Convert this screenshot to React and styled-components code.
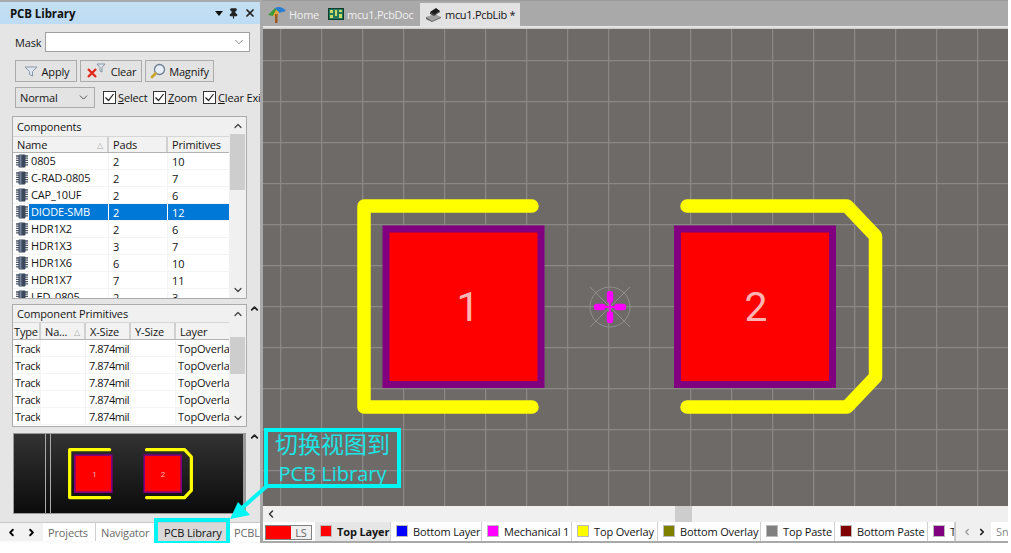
import React from 'react'
import styled, { createGlobalStyle } from 'styled-components'
import { ChevronDown, ChevronUp, ChevronLeft, ChevronRight, Pin, X } from 'lucide-react'

const GlobalStyle = createGlobalStyle`
  html, body { margin: 0; padding: 0; background: #fff; overflow: hidden; }
  * { box-sizing: border-box; }
  body {
    font-family: "Open Sans", "Noto Sans", "Liberation Sans", sans-serif;
    font-size: 11px;
    letter-spacing: -0.15px;
    color: #151515;
  }
`

const Window = styled.div`
  position: relative;
  display: flex;
  width: 1008px;
  height: 543px;
  background: #a9a9a9;
`

/* left panel */
const LeftPanel = styled.aside`
  display: flex;
  flex-direction: column;
  width: 260px;
  margin-top: 2px;
  background: #e5e5e5;
  flex-shrink: 0;
  overflow: hidden;
`

const TitleBar = styled.header`
  display: flex;
  align-items: center;
  height: 22px;
  padding: 0 4px 0 10px;
  background: linear-gradient(#c4dff3, #bddcf4);
`

const TitleText = styled.h1`
  flex: 1;
  margin: 0;
  font-size: 11.5px;
  font-weight: 700;
  letter-spacing: -0.1px;
  color: #111;
`

const TitleIcons = styled.div`
  display: flex;
  align-items: center;
  gap: 5px;
  color: #222;
`

const Caret = styled.span`
  width: 0;
  height: 0;
  border-left: 4px solid transparent;
  border-right: 4px solid transparent;
  border-top: 5px solid #111;
`

const MaskRow = styled.div`
  display: flex;
  align-items: center;
  gap: 4px;
  height: 20px;
  margin: 8px 0 0 15px;
`

const MaskInput = styled.div`
  display: flex;
  align-items: center;
  justify-content: flex-end;
  width: 205px;
  height: 20px;
  padding-right: 3px;
  background: #fff;
  border: 1px solid #a0a0a0;
  color: #666;
`

const ButtonRow = styled.div`
  display: flex;
  gap: 3px;
  margin: 8px 0 0 15px;
`

const ToolButton = styled.button`
  display: flex;
  align-items: center;
  justify-content: center;
  gap: 3px;
  width: ${(p) => p.$width}px;
  height: 22px;
  padding: 0;
  background: #e3e3e3;
  border: 1px solid #ababab;
  font: inherit;
  letter-spacing: inherit;
  color: #151515;
`

const OptionRow = styled.div`
  display: flex;
  align-items: center;
  height: 21px;
  margin: 5px 0 0 15px;
  white-space: nowrap;
`

const ModeSelect = styled.div`
  display: flex;
  align-items: center;
  justify-content: space-between;
  width: 80px;
  height: 21px;
  margin-right: 8px;
  padding: 0 4px;
  flex-shrink: 0;
  background: #e3e3e3;
  border: 1px solid #ababab;
`

const CheckLabel = styled.label`
  display: flex;
  align-items: center;
  gap: 2px;
  width: ${(p) => p.$width}px;
  flex-shrink: 0;
`

const CheckBox = styled.span`
  display: flex;
  align-items: center;
  justify-content: center;
  width: 13px;
  height: 13px;
  background: #fff;
  border: 1px solid #333;
`

const ListPanel = styled.section`
  display: flex;
  width: 235px;
  height: ${(p) => p.$height}px;
  margin: ${(p) => p.$top}px 0 0 12px;
  background: #fff;
  border: 1px solid #ababab;
  overflow: hidden;
`

const ListBody = styled.div`
  flex: 1;
  min-width: 0;
`

const ListTitle = styled.div`
  display: flex;
  align-items: center;
  height: ${(p) => p.$height}px;
  padding-left: 4px;
  background: #f0f0f0;
`

const Row = styled.div`
  display: grid;
  grid-template-columns: ${(p) => p.$columns};
  height: 17px;
  background: #fff;
  border-bottom: 1px solid #f4f4f4;
`

const HeadRow = styled(Row)`
  height: ${(p) => p.$height}px;
  background: #f2f2f2;
  border-top: 1px solid #d6d6d6;
  border-bottom: 1px solid #b4b4b4;
`

const HeadCell = styled.div`
  display: flex;
  align-items: center;
  justify-content: space-between;
  padding: 0 ${(p) => p.$pad ?? 4}px;
  border-right: 2px solid #d0d0d0;
  overflow: hidden;
  white-space: nowrap;
  &:last-child { border-right: 0; }
`

const SortMark = styled.span`
  font-size: 8px;
  color: #aaa;
`

const Cell = styled.div`
  display: flex;
  align-items: center;
  padding-left: ${(p) => p.$pad ?? 4}px;
  background: ${(p) => (p.$selected ? '#0078d7' : 'transparent')};
  color: ${(p) => (p.$selected ? '#fff' : 'inherit')};
  border-right: 1px solid ${(p) => (p.$selected ? '#fff' : '#f4f4f4')};
  letter-spacing: ${(p) => (p.$tight ? '-0.45px' : 'inherit')};
  overflow: hidden;
  white-space: nowrap;
  &:last-child { border-right: 0; }
`

const NameCell = styled.div`
  display: flex;
  align-items: center;
  gap: 1px;
  padding-left: 3px;
  overflow: hidden;
`

const NameText = styled.span`
  flex: 1;
  height: 100%;
  padding-left: 2px;
  line-height: 16px;
  background: ${(p) => (p.$selected ? '#0078d7' : 'transparent')};
  color: ${(p) => (p.$selected ? '#fff' : 'inherit')};
  border-right: 1px solid ${(p) => (p.$selected ? '#fff' : '#f4f4f4')};
`

const ScrollTrack = styled.div`
  display: flex;
  flex-direction: column;
  flex-shrink: 0;
  width: 17px;
  background: #f0f0f0;
  color: #444;
`

const ScrollButton = styled.div`
  display: flex;
  align-items: center;
  justify-content: center;
  height: 17px;
  flex-shrink: 0;
`

const ScrollLane = styled.div`
  flex: 1;
  padding: ${(p) => p.$offset}px 1px 0;
`

const ScrollThumb = styled.div`
  height: ${(p) => p.$height}px;
  background: #cdcdcd;
`

const PreviewRow = styled.div`
  position: relative;
  width: 233px;
  height: 81px;
  margin: 6px 0 0 13px;
  background: linear-gradient(#333, #0b0b0b);
  border: 1px solid #9a9a9a;
  overflow: hidden;
`

const PreviewBars = styled.div`
  position: absolute;
  inset: 0;
  border-right: 2px solid #9a9a9a;
  &::before {
    content: '';
    position: absolute;
    top: 0;
    bottom: 0;
    left: 31px;
    width: 4px;
    border-left: 1px solid #aaa;
    border-right: 1px solid #aaa;
  }
`

const PreviewSvg = styled.svg`
  position: relative;
  display: block;
`

const PanelTabs = styled.nav`
  display: flex;
  align-items: stretch;
  height: 21px;
  margin-top: auto;
  padding-bottom: 2px;
  background: #fbfbfb;
  border-top: 1px solid #c8c8c8;
`

const TabArrows = styled.div`
  display: flex;
  align-items: center;
  justify-content: space-between;
  width: 43px;
  padding: 0 6px;
  background: #f2f2f2;
  color: #000;
  flex-shrink: 0;
`

const PanelTab = styled.div`
  display: flex;
  align-items: center;
  width: ${(p) => p.$width}px;
  padding-left: ${(p) => p.$pad}px;
  flex-shrink: 0;
  background: ${(p) => (p.$active ? '#d9d9d9' : '#fff')};
  color: ${(p) => (p.$active ? '#111' : '#6b6b6b')};
  border-right: 1px solid #d0d0d0;
  white-space: nowrap;
`

/* document area */
const Main = styled.main`
  display: flex;
  flex-direction: column;
  flex: 1;
  min-width: 0;
  margin-left: 3px;
`

const DocTabs = styled.div`
  display: flex;
  align-items: flex-end;
  height: 26px;
  padding-top: 2px;
  padding-left: 3px;
  background: #a9a9a9;
  border-top: 1px solid #9c9c9c;
`

const DocTab = styled.div`
  display: flex;
  align-items: center;
  gap: 3px;
  width: ${(p) => p.$width}px;
  height: 100%;
  padding-left: ${(p) => p.$pad}px;
  background: ${(p) => (p.$active ? '#e2e2e2' : 'transparent')};
  color: ${(p) => (p.$active ? '#111' : '#efefef')};
  letter-spacing: -0.3px;
  white-space: nowrap;
`

const TabRule = styled.div`
  height: 3px;
  background: linear-gradient(#f0f0f0, #c8c8c8);
`

const CanvasArea = styled.div`
  flex: 1;
  min-height: 0;
  background: #6e6a68;
  overflow: hidden;
  svg { display: block; }
`

const HScroll = styled.div`
  display: flex;
  align-items: center;
  height: 16px;
  padding-left: 2px;
  background: #f0f0f0;
  color: #333;
`

const HThumb = styled.div`
  width: 17px;
  height: 16px;
  margin-left: 398px;
  background: #cdcdcd;
`

const LayerBar = styled.div`
  display: flex;
  align-items: stretch;
  height: 19px;
  background: #fff;
  overflow: hidden;
`

const BottomEdge = styled.div`
  height: 2px;
`

const CurrentLayer = styled.div`
  display: flex;
  width: 47px;
  height: 15px;
  margin: 3px 3px 0 2px;
  background: #f0f0f0;
  border: 1px solid #808080;
  flex-shrink: 0;
`

const CurrentSwatch = styled.span`
  width: 25px;
  background: #ff0000;
`

const CurrentName = styled.span`
  flex: 1;
  text-align: center;
  line-height: 13px;
  color: #666;
`

const LayerTab = styled.div`
  display: flex;
  align-items: center;
  gap: 6px;
  width: ${(p) => p.$width}px;
  padding-left: 6px;
  flex-shrink: 0;
  background: ${(p) => (p.$active ? '#e6e6e6' : '#fff')};
  border-right: 1px solid #d0d0d0;
  font-weight: ${(p) => (p.$active ? 700 : 400)};
  overflow: hidden;
  white-space: nowrap;
`

const Swatch = styled.span`
  width: 10px;
  height: 10px;
  flex-shrink: 0;
  margin-bottom: 2px;
  background: ${(p) => p.$color};
  outline: 1px solid #bbb;
`

const LayerNav = styled.div`
  display: flex;
  align-items: center;
  justify-content: space-between;
  width: 36px;
  padding: 0 4px 0 6px;
  background: #f0f0f0;
  border-left: 1px solid #c8c8c8;
  flex-shrink: 0;
`

const SnapLabel = styled.div`
  padding: 2px 0 0 5px;
  color: #888;
`

/* things lying over the panels */
const Annotation = styled.div`
  position: absolute;
  left: 264px;
  top: 428px;
  width: 137px;
  height: 60px;
  border: 4px solid #00f5f5;
  color: #19e6e6;
  text-align: center;
  letter-spacing: 0;
`

const AnnotationCn = styled.div`
  margin-top: -2px;
  font-family: "Noto Sans CJK SC", sans-serif;
  font-size: 23px;
  line-height: 26px;
`

const AnnotationEn = styled.div`
  margin-top: 7px;
  font-size: 20px;
  line-height: 22px;
`

const TabHighlight = styled.div`
  position: absolute;
  left: 154px;
  top: 518px;
  width: 76px;
  height: 27px;
  border: 4px solid #00f5f5;
`

const ArrowMark = styled.svg`
  position: absolute;
  left: 225px;
  top: 480px;
`

const SplitterMark = styled.div`
  position: absolute;
  left: 249px;
  top: ${(p) => p.$top}px;
  color: #222;
  line-height: 0;
`

const ChipIcon = () => (
  <svg width="12" height="14" viewBox="0 0 12 14">
    <path d="M0 2h12M0 4.2h12M0 6.4h12M0 8.6h12M0 10.8h12" stroke="#4d5867" strokeWidth="1.3" />
    <rect x="2.5" y="0.5" width="7" height="13" rx="1" fill="#3b475a" />
    <rect x="3.5" y="1" width="2" height="12" fill="#76849a" />
  </svg>
)

const FilterIcon = () => (
  <svg width="16" height="14" viewBox="0 0 16 14">
    <path d="M2 3h12L9.5 7.5V12l-3-1.5v-3z" fill="#dfe6ee" stroke="#8796a8" />
  </svg>
)

const ClearIcon = () => (
  <svg width="22" height="16" viewBox="0 0 22 16">
    <path d="M2 6l8 8M10 6l-8 8" stroke="#e22a1c" strokeWidth="2.4" />
    <path d="M11 1h8l-3 3.5V9l-2-1V4.5z" fill="#dfe6ee" stroke="#8796a8" />
  </svg>
)

const MagnifyIcon = () => (
  <svg width="16" height="16" viewBox="0 0 16 16">
    <circle cx="9.5" cy="6.5" r="5" fill="#e6eef6" stroke="#6e7f92" strokeWidth="1.3" />
    <path d="M5.5 10.5L2 14" stroke="#c9a227" strokeWidth="2.6" strokeLinecap="round" />
  </svg>
)

const TickIcon = () => (
  <svg width="11" height="11" viewBox="0 0 11 11">
    <path d="M1.5 5.5l3 3 5-6.5" fill="none" stroke="#222" strokeWidth="1.2" />
  </svg>
)

const HomeIcon = () => (
  <svg width="18" height="17" viewBox="0 0 18 17">
    <path d="M0 9L7 2l2 2-4 6z" fill="#3f9a3a" />
    <path d="M7 2c4-2 8-1 11 3l-7 2z" fill="#2a7fd0" />
    <path d="M5 10l3-6 3 2-2 5z" fill="#e9a93a" />
    <rect x="7" y="8" width="2.5" height="9" fill="#9c5a25" />
  </svg>
)

const BoardIcon = () => (
  <svg width="16" height="13" viewBox="0 0 16 13">
    <rect x="0.5" y="0.5" width="15" height="11" fill="#24795a" stroke="#0f3d2d" />
    <path d="M2 2h3v3H2zM7 2h2v6H7zM11 2h3v2h-3zM2 7h3v3H2zM11 6h3v4h-3z" fill="#c9d96a" />
  </svg>
)

const LibIcon = () => (
  <svg width="17" height="16" viewBox="0 0 17 16">
    <path d="M1 10l9-3 6 3-9 4z" fill="#a0a0a0" />
    <path d="M1 10v2l6 3 9-4v-1l-9 4z" fill="#5c5c5c" />
    <path d="M5 5l6-4 4 3-6 4z" fill="#1c1c1c" />
    <path d="M5 5v2l4 2 6-4V4L9 8z" fill="#3a3a3a" />
  </svg>
)

const Footprint = ({ center, fontSize }) => (
  <>
    <path d="M532 206H364V407H532" fill="none" stroke="#ffff00" strokeWidth="13.5" strokeLinecap="round" strokeLinejoin="round" />
    <path d="M687 206H847L875.5 236V377L847 407H687" fill="none" stroke="#ffff00" strokeWidth="13.5" strokeLinecap="round" strokeLinejoin="round" />
    <rect x="386" y="229" width="155" height="155.5" fill="#ff0000" stroke="#800080" strokeWidth="7" />
    <rect x="677.5" y="229" width="155" height="155.5" fill="#ff0000" stroke="#800080" strokeWidth="7" />
    <text x="468" y="321" fontFamily="Roboto, sans-serif" fontSize={fontSize} textAnchor="middle" fill="#ffb4b4">1</text>
    <text x="756" y="321" fontFamily="Roboto, sans-serif" fontSize={fontSize} textAnchor="middle" fill="#ffb4b4">2</text>
    {center && (
      <g>
        <circle cx="610" cy="307" r="20" fill="none" stroke="#8f8f8f" />
        <path d="M590 287l40 40M630 287l-40 40" stroke="#8f8f8f" />
        <path d="M597 307H602.5M623 307H617.5M610 294V299.5M610 320V314.5" stroke="#ff00ff" strokeWidth="6.5" strokeLinecap="round" />
        <path d="M604 307h12M610 301v12" stroke="#ff00ff" strokeWidth="2" />
      </g>
    )}
  </>
)

const compColumns = '96px 59px 1fr'
const primColumns = '28px 45px 45px 45px 1fr'

const components = [
  ['0805', 2, 10],
  ['C-RAD-0805', 2, 7],
  ['CAP_10UF', 2, 6],
  ['DIODE-SMB', 2, 12],
  ['HDR1X2', 2, 6],
  ['HDR1X3', 3, 7],
  ['HDR1X6', 6, 10],
  ['HDR1X7', 7, 11],
  ['LED_0805', 2, 3],
]

const primitives = [1, 2, 3, 4, 5]

const layers = [
  ['Top Layer', '#ff0000', 76],
  ['Bottom Layer', '#0000ff', 91],
  ['Mechanical 1', '#ff00ff', 90],
  ['Top Overlay', '#ffff00', 86],
  ['Bottom Overlay', '#808000', 103],
  ['Top Paste', '#808080', 74],
  ['Bottom Paste', '#800000', 93],
  ['Top Solder', '#800080', 27],
]

const Scrollbar = ({ offset, thumb }) => (
  <ScrollTrack>
    <ScrollButton><ChevronUp size={12} strokeWidth={2.5} /></ScrollButton>
    <ScrollLane $offset={offset}><ScrollThumb $height={thumb} /></ScrollLane>
    <ScrollButton><ChevronDown size={12} strokeWidth={2.5} /></ScrollButton>
  </ScrollTrack>
)

const App = () => {
  return (
    <Window>
      <GlobalStyle />
      <LeftPanel>
        <TitleBar>
          <TitleText>PCB Library</TitleText>
          <TitleIcons>
            <Caret />
            <Pin size={11} fill="#222" strokeWidth={2.5} />
            <X size={12} strokeWidth={3.5} />
          </TitleIcons>
        </TitleBar>
        <MaskRow>
          <span>Mask</span>
          <MaskInput><ChevronDown size={14} strokeWidth={1.3} /></MaskInput>
        </MaskRow>
        <ButtonRow>
          <ToolButton $width={62}><FilterIcon />Apply</ToolButton>
          <ToolButton $width={62}><ClearIcon />Clear</ToolButton>
          <ToolButton $width={69}><MagnifyIcon />Magnify</ToolButton>
        </ButtonRow>
        <OptionRow>
          <ModeSelect>Normal<ChevronDown size={13} strokeWidth={1.3} /></ModeSelect>
          <CheckLabel $width={50}><CheckBox><TickIcon /></CheckBox><span><u>S</u>elect</span></CheckLabel>
          <CheckLabel $width={50}><CheckBox><TickIcon /></CheckBox><span><u>Z</u>oom</span></CheckLabel>
          <CheckLabel $width={70}><CheckBox><TickIcon /></CheckBox><span><u>C</u>lear Existing</span></CheckLabel>
        </OptionRow>
        <ListPanel $height={183} $top={8}>
          <ListBody>
            <ListTitle $height={19}>Components</ListTitle>
            <HeadRow $columns={compColumns} $height={17}>
              <HeadCell>Name<SortMark>△</SortMark></HeadCell>
              <HeadCell>Pads</HeadCell>
              <HeadCell>Primitives</HeadCell>
            </HeadRow>
            {components.map(([name, pads, prims]) => {
              const selected = name === 'DIODE-SMB'
              return (
                <Row key={name} $columns={compColumns}>
                  <NameCell>
                    <ChipIcon />
                    <NameText $selected={selected}>{name}</NameText>
                  </NameCell>
                  <Cell $selected={selected}>{pads}</Cell>
                  <Cell $selected={selected}>{prims}</Cell>
                </Row>
              )
            })}
          </ListBody>
          <Scrollbar offset={0} thumb={56} />
        </ListPanel>
        <ListPanel $height={123} $top={5}>
          <ListBody>
            <ListTitle $height={17}>Component Primitives</ListTitle>
            <HeadRow $columns={primColumns} $height={18}>
              <HeadCell $pad={1}>Type</HeadCell>
              <HeadCell>Na...<SortMark>△</SortMark></HeadCell>
              <HeadCell>X-Size</HeadCell>
              <HeadCell>Y-Size</HeadCell>
              <HeadCell>Layer</HeadCell>
            </HeadRow>
            {primitives.map((n) => (
              <Row key={n} $columns={primColumns}>
                <Cell $pad={2} $tight>Track</Cell>
                <Cell />
                <Cell $pad={3} $tight>7.874mil</Cell>
                <Cell />
                <Cell $pad={2}>TopOverlay</Cell>
              </Row>
            ))}
          </ListBody>
          <Scrollbar offset={15} thumb={37} />
        </ListPanel>
        <PreviewRow>
          <PreviewBars />
          <PreviewSvg width="231" height="79" viewBox="130 140 971 332">
            <Footprint fontSize={34} />
          </PreviewSvg>
        </PreviewRow>
        <PanelTabs>
          <TabArrows>
            <ChevronLeft size={11} strokeWidth={4} />
            <ChevronRight size={11} strokeWidth={4} />
          </TabArrows>
          <PanelTab $width={53} $pad={5}>Projects</PanelTab>
          <PanelTab $width={60} $pad={5}>Navigator</PanelTab>
          <PanelTab $width={73} $pad={8} $active>PCB Library</PanelTab>
          <PanelTab $width={40} $pad={5}>PCBLIB</PanelTab>
        </PanelTabs>
      </LeftPanel>

      <Main>
        <DocTabs>
          <DocTab $width={60} $pad={2}><HomeIcon />Home</DocTab>
          <DocTab $width={94} $pad={2}><BoardIcon />mcu1.PcbDoc</DocTab>
          <DocTab $width={100} $pad={5} $active><LibIcon />mcu1.PcbLib *</DocTab>
        </DocTabs>
        <TabRule />
        <CanvasArea>
          <svg width="745" height="477" viewBox="263 29 745 477">
            <defs>
              <pattern id="grid" x="280" y="60" width="41" height="41" patternUnits="userSpaceOnUse">
                <path d="M0.5 0V41M0 0.5H41" stroke="#8b8886" strokeWidth="1.4" fill="none" />
              </pattern>
            </defs>
            <rect x="263" y="29" width="745" height="477" fill="url(#grid)" />
            <Footprint center fontSize={41} />
          </svg>
        </CanvasArea>
        <HScroll>
          <ChevronLeft size={12} strokeWidth={3} />
          <HThumb />
        </HScroll>
        <LayerBar>
          <CurrentLayer><CurrentSwatch /><CurrentName>LS</CurrentName></CurrentLayer>
          {layers.map(([name, color, width], i) => (
            <LayerTab key={name} $width={width} $active={i === 0}>
              <Swatch $color={color} />
              {name}
            </LayerTab>
          ))}
          <LayerNav>
            <ChevronLeft size={10} color="#999" strokeWidth={3} />
            <ChevronRight size={10} strokeWidth={4} />
          </LayerNav>
          <SnapLabel>Snap</SnapLabel>
        </LayerBar>
        <BottomEdge />
      </Main>

      <SplitterMark $top={303}><ChevronUp size={11} strokeWidth={4} /></SplitterMark>
      <SplitterMark $top={431}><ChevronUp size={11} strokeWidth={4} /></SplitterMark>

      <ArrowMark width="50" height="45" viewBox="225 480 50 45">
        <path d="M267 486L242 508" stroke="#00f5f5" strokeWidth="4" />
        <path d="M230 519L238 502L250 515z" fill="#00f5f5" />
      </ArrowMark>
      <TabHighlight />
      <Annotation>
        <AnnotationCn>切换视图到</AnnotationCn>
        <AnnotationEn>PCB Library</AnnotationEn>
      </Annotation>
    </Window>
  )
}

export default App
